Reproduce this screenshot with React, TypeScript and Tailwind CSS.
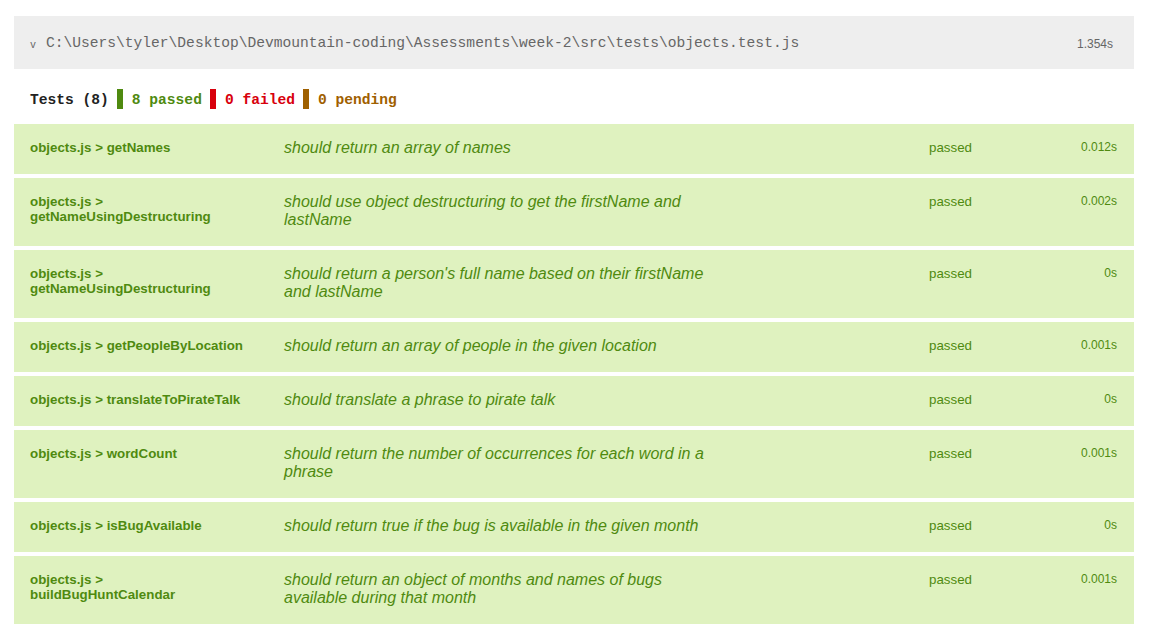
const tests = [
  { suite: "objects.js > getNames", title: "should return an array of names", time: "0.012s" },
  {
    suite: "objects.js > getNameUsingDestructuring",
    title: "should use object destructuring to get the firstName and lastName",
    time: "0.002s",
  },
  {
    suite: "objects.js > getNameUsingDestructuring",
    title: "should return a person's full name based on their firstName and lastName",
    time: "0s",
  },
  {
    suite: "objects.js > getPeopleByLocation",
    title: "should return an array of people in the given location",
    time: "0.001s",
  },
  { suite: "objects.js > translateToPirateTalk", title: "should translate a phrase to pirate talk", time: "0s" },
  {
    suite: "objects.js > wordCount",
    title: "should return the number of occurrences for each word in a phrase",
    time: "0.001s",
  },
  {
    suite: "objects.js > isBugAvailable",
    title: "should return true if the bug is available in the given month",
    time: "0s",
  },
  {
    suite: "objects.js > buildBugHuntCalendar",
    title: "should return an object of months and names of bugs available during that month",
    time: "0.001s",
  },
]

const mono = "font-['Liberation_Mono','DejaVu_Sans_Mono',monospace]"

export default function App() {
  return (
    <div className="min-h-screen bg-white pt-4 font-['Liberation_Sans',Arial,sans-serif]">
      <div className="ml-[14px] w-[1120px]">
        <div className="flex h-[53px] items-center justify-between bg-[#eeeeee] pl-4 pr-[21px] pt-[2px] text-[#666]">
          <div className="flex items-center">
            <span className={`${mono} mt-[5px] w-4 text-[10px] leading-none`}>v</span>
            <span className={`${mono} text-[14.6px]`}>
              C:\Users\tyler\Desktop\Devmountain-coding\Assessments\week-2\src\tests\objects.test.js
            </span>
          </div>
          <span className="text-[12px]">1.354s</span>
        </div>

        <div className={`${mono} mt-5 flex h-5 items-center pl-4 text-[14.6px] font-bold`}>
          <span className="mt-[3px] text-[#222]">Tests (8)</span>
          <span className="ml-2 mr-[9px] h-5 w-[6px] bg-[#4f8a10]" />
          <span className="mt-[3px] text-[#4f8a10]">8 passed</span>
          <span className="ml-2 mr-[9px] h-5 w-[6px] bg-[#d8000c]" />
          <span className="mt-[3px] text-[#d8000c]">0 failed</span>
          <span className="ml-2 mr-[9px] h-5 w-[6px] bg-[#9f6000]" />
          <span className="mt-[3px] text-[#9f6000]">0 pending</span>
        </div>

        <div className="mt-[15px]">
          {tests.map((t, i) => (
            <div
              key={i}
              className="mb-1 grid grid-cols-[254px_645px_1fr_auto] items-start bg-[#dff2bf] pl-4 pr-[17px] pt-[15px] pb-[17px] text-[13.33px] text-[#4f8a10]"
            >
              <div className="mt-[1px] max-w-[218px] font-bold leading-[15.3px]">{t.suite}</div>
              <div className="max-w-[435px] text-[16px] italic leading-[18px]">{t.title}</div>
              <div className="mt-[1px] leading-[15.3px]">passed</div>
              <div className="mt-[1px] text-right text-[12px] leading-[14px]">{t.time}</div>
            </div>
          ))}
        </div>
      </div>
    </div>
  )
}
